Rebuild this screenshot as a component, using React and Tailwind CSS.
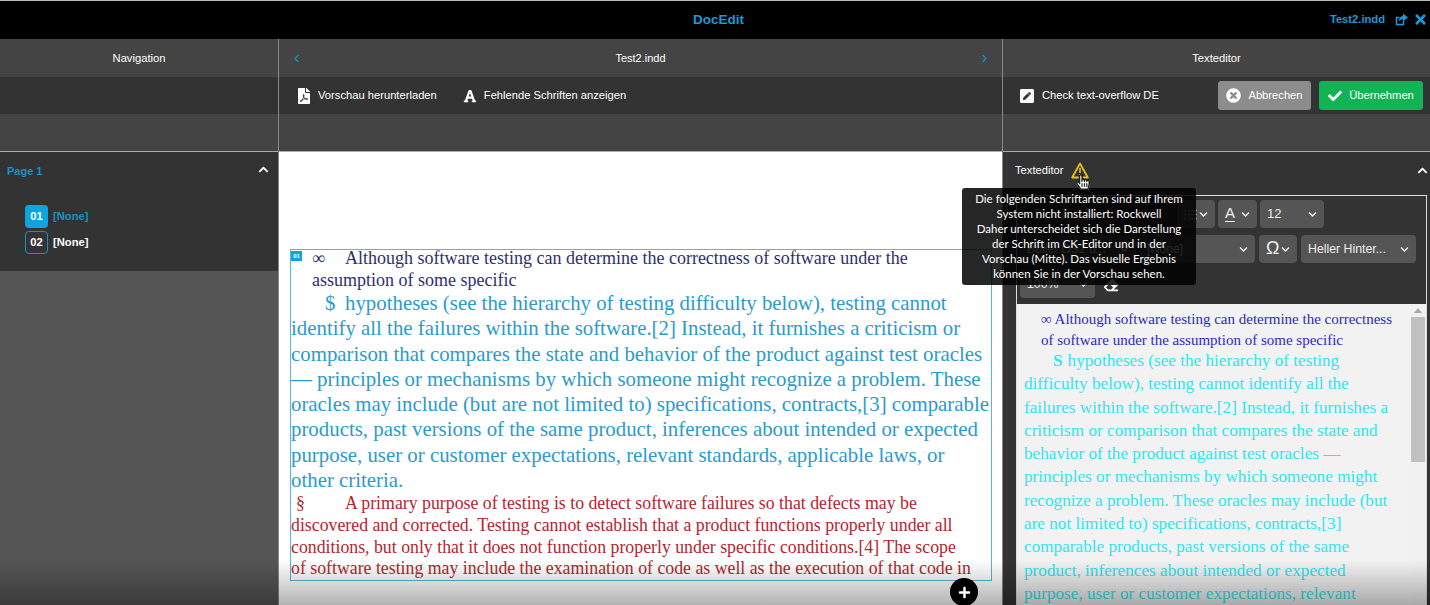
import React from "react";
import {
    FaChevronLeft,
    FaChevronRight,
    FaChevronUp,
    FaChevronDown,
    FaFilePdf,
    FaFont,
    FaPenSquare,
    FaTimesCircle,
    FaCheck,
    FaTimes,
    FaEraser,
    FaHandPointer,
    FaRegHandPointer,
    FaPlus,
    FaBold,
    FaItalic,
    FaUnderline,
    FaListUl,
} from "react-icons/fa";

const navyLines = [
    "assumption of some specific",
];

const cyanLines = [
    "identify all the failures within the software.[2] Instead, it furnishes a criticism or",
    "comparison that compares the state and behavior of the product against test oracles",
    "— principles or mechanisms by which someone might recognize a problem. These",
    "oracles may include (but are not limited to) specifications, contracts,[3] comparable",
    "products, past versions of the same product, inferences about intended or expected",
    "purpose, user or customer expectations, relevant standards, applicable laws, or",
    "other criteria.",
];

const redLines = [
    "discovered and corrected. Testing cannot establish that a product functions properly under all",
    "conditions, but only that it does not function properly under specific conditions.[4] The scope",
    "of software testing may include the examination of code as well as the execution of that code in",
];

const editorCyan = [
    "difficulty below), testing cannot identify all the",
    "failures within the software.[2] Instead, it furnishes a",
    "criticism or comparison that compares the state and",
    "behavior of the product against test oracles —",
    "principles or mechanisms by which someone might",
    "recognize a problem. These oracles may include (but",
    "are not limited to) specifications, contracts,[3]",
    "comparable products, past versions of the same",
    "product, inferences about intended or expected",
    "purpose, user or customer expectations, relevant",
];

const Select = ({ width, children }) => (
    <div
        className={`flex h-[28px] items-center justify-between rounded-sm bg-[#555] px-[7px] text-[12.3px] text-[#eee] ${width}`}
    >
        <span className="whitespace-nowrap">{children}</span>
        <FaChevronDown className="ml-px shrink-0 text-[9px]" />
    </div>
);

const App = () => {
    return (
        <div className="relative h-screen w-full overflow-hidden bg-black font-['Liberation_Sans',sans-serif] text-[11.2px] text-white">
            {/* top bar */}
            <header className="relative flex h-[39px] items-center justify-center border-t border-[#bbb] bg-black">
                <div className="pl-[7px] text-[13.5px] font-bold text-[#1a9ad6]">DocEdit</div>
                <div className="absolute right-[2px] top-[10px] flex items-center text-[#1a9ad6]">
                    <span className="mr-[10px] text-[11.2px] font-bold">Test2.indd</span>
                    <svg className="mr-[5px]" width="13" height="13" viewBox="0 0 13 13">
                        <path d="M8.5 8v3.5h-7v-7h3" fill="none" stroke="currentColor" strokeWidth="1.5" />
                        <path d="M8 0.5 13 4.5 8 8.5V6.2C6 6.2 4.6 6.9 3.8 8.8 3.8 5.6 5.5 3.4 8 3.1z" fill="currentColor" />
                    </svg>
                    <FaTimes className="text-[15px]" />
                </div>
            </header>

            <div className="flex h-[566px]">
                {/* Navigation */}
                <aside className="flex w-[279px] shrink-0 flex-col border-r border-[#888]">
                    <div className="flex h-[38px] items-center justify-center bg-[#444]">Navigation</div>
                    <div className="h-[37px] bg-[#333]"></div>
                    <div className="h-[38px] border-b border-[#aaa] bg-[#444]"></div>
                    <div className="h-[119px] bg-[#333] px-[7px] pt-[11px]">
                        <div className="flex items-center justify-between pr-[2px]">
                            <span className="text-[11px] font-bold text-[#1a8fc8]">Page 1</span>
                            <FaChevronUp className="mb-1 text-[11px]" />
                        </div>
                        <div className="ml-[18px] mt-[25px] flex items-center gap-[5px]">
                            <span className="flex h-[23px] w-[23px] items-center justify-center rounded-[4px] bg-[#0ea5df] font-bold">01</span>
                            <span className="font-bold text-[#1a8fc8]">[None]</span>
                        </div>
                        <div className="ml-[18px] mt-[3px] flex items-center gap-[5px]">
                            <span className="flex h-[23px] w-[23px] items-center justify-center rounded-[4px] border border-[#1a8fc8] font-bold">02</span>
                            <span className="font-bold">[None]</span>
                        </div>
                    </div>
                    <div className="flex-1 bg-[#555]"></div>
                </aside>

                {/* Preview */}
                <main className="flex min-w-0 flex-1 flex-col">
                    <div className="flex h-[38px] items-center justify-between bg-[#444] px-[13px] text-[#1a8fc8]">
                        <FaChevronLeft className="text-[9px]" />
                        <span className="text-[11px] text-white">Test2.indd</span>
                        <FaChevronRight className="text-[9px]" />
                    </div>
                    <div className="flex h-[37px] items-center bg-[#333] pl-[17px]">
                        <FaFilePdf className="mr-[6px] text-[16px]" />
                        <span>Vorschau herunterladen</span>
                        <FaFont className="ml-[26px] mr-[7px] text-[14px]" />
                        <span>Fehlende Schriften anzeigen</span>
                    </div>
                    <div className="h-[38px] border-b border-[#aaa] bg-[#444]"></div>
                    <div className="flex-1 overflow-hidden bg-white pl-[11px] pr-[10px] pt-[97px]">
                        <div className="relative h-[332px] overflow-hidden whitespace-nowrap border border-[#5ab4dc] font-['Liberation_Serif',serif]">
                            <span className="absolute left-0 top-px flex h-[10px] w-[11px] items-center justify-center bg-[#0ea5df] font-['Liberation_Sans',sans-serif] text-[6px] font-bold text-white">01</span>
                            <div className="-mt-[3px] pl-[21px] text-[18px] leading-[22px] text-[#2f2f6e]">
                                <div>
                                    <span className="inline-block w-[33px]">∞</span>
                                    Although software testing can determine the correctness of software under the
                                </div>
                                {navyLines.map((line) => (
                                    <div key={line}>{line}</div>
                                ))}
                            </div>
                            <div className="text-[20.85px] leading-[25.3px] text-[#2b9bcb]">
                                <div className="pl-[34px]">
                                    <span className="inline-block w-[20px]">$</span>
                                    hypotheses (see the hierarchy of testing difficulty below), testing cannot
                                </div>
                                {cyanLines.map((line) => (
                                    <div key={line}>{line}</div>
                                ))}
                            </div>
                            <div className="text-[17.8px] leading-[21.7px] text-[#b3262e]">
                                <div className="pl-[5px]">
                                    <span className="inline-block w-[49px]">§</span>
                                    A primary purpose of testing is to detect software failures so that defects may be
                                </div>
                                {redLines.map((line) => (
                                    <div key={line}>{line}</div>
                                ))}
                            </div>
                        </div>
                    </div>
                </main>

                {/* Text editor */}
                <aside className="flex w-[428px] shrink-0 flex-col border-l border-[#888]">
                    <div className="flex h-[38px] items-center justify-center bg-[#444]">Texteditor</div>
                    <div className="flex h-[37px] items-center bg-[#333] pl-[16px] pr-[7px]">
                        <FaPenSquare className="mr-[7px] text-[16px]" />
                        <span>Check text-overflow DE</span>
                        <div className="ml-auto flex h-[29px] w-[93px] items-center justify-center gap-[7px] rounded-[3px] bg-[#8c8c8c]">
                            <FaTimesCircle className="text-[15px]" />
                            <span>Abbrechen</span>
                        </div>
                        <div className="ml-[8px] flex h-[29px] w-[104px] items-center justify-center gap-[7px] rounded-[3px] bg-[#12b355]">
                            <FaCheck className="text-[14px]" />
                            <span>Übernehmen</span>
                        </div>
                    </div>
                    <div className="h-[38px] border-b border-[#aaa] bg-[#444]"></div>

                    <div className="flex flex-1 flex-col overflow-hidden bg-[#333]">
                        <div className="flex h-[43px] shrink-0 items-center justify-between pb-[6px] pl-[12px] pr-[2px]">
                            <div className="flex items-center gap-[7px]">
                                <span>Texteditor</span>
                                <svg width="18" height="17" viewBox="0 0 18 17" fill="none" stroke="#e3c31a" strokeWidth="1.8" strokeLinejoin="round">
                                    <path d="M9 1.5 1.2 15.5h15.6z" />
                                    <path d="M9 6v5M9 12.5v1.2" stroke="#e3c31a" strokeWidth="1.6" />
                                </svg>
                            </div>
                            <FaChevronUp className="text-[11px]" />
                        </div>

                        {/* CK editor */}
                        <div className="ml-[13px] mr-[3px] flex min-h-0 flex-1 flex-col border-x border-t border-[#ddd]">
                            <div className="flex h-[108px] shrink-0 flex-col gap-[7px] px-[3px] pt-[4px]">
                                <div className="flex items-center gap-[3px] pl-[12px]">
                                    <div className="flex items-center gap-[14px] text-[12px] text-[#aaa]">
                                        <FaBold />
                                        <FaItalic />
                                        <FaUnderline />
                                    </div>
                                    <div className="ml-auto"></div>
                                    <Select width="w-[38px]">
                                        <FaListUl className="text-[13px] text-[#999]" />
                                    </Select>
                                    <Select width="w-[39px]">
                                        <span className="border-b border-white text-[15px] leading-[17px]">A</span>
                                    </Select>
                                    <Select width="w-[64px]">
                                        <span className="text-[13px]">12</span>
                                    </Select>
                                    <div className="w-[96px]"></div>
                                </div>
                                <div className="flex items-center gap-[4px]">
                                    <Select width="w-[116px]">Bullet OS2 d...</Select>
                                    <Select width="w-[115px]">[None]</Select>
                                    <Select width="w-[38px]">
                                        <span className="text-[18px] leading-[20px]">Ω</span>
                                    </Select>
                                    <Select width="w-[115px]">Heller Hinter...</Select>
                                </div>
                                <div className="flex items-center gap-[9px]">
                                    <Select width="w-[75px]">100%</Select>
                                    <FaEraser className="mt-[2px] text-[14px]" />
                                </div>
                            </div>
                            <div className="relative min-h-0 flex-1 overflow-hidden whitespace-nowrap bg-[#f2f2f2] pl-[7px] pt-[5px] font-['Liberation_Serif',serif]">
                                <div className="pl-[17px] text-[15px] leading-[21px] text-[#2a2ac4]">
                                    <div>∞ Although software testing can determine the correctness</div>
                                    <div>of software under the assumption of some specific</div>
                                </div>
                                <div className="-mt-[2px] text-[17.2px] leading-[23.3px] text-[#2ee6f0]">
                                    <div className="pl-[29px]">
                                        <span className="mr-[5px] font-bold">S</span>
                                        hypotheses (see the hierarchy of testing
                                    </div>
                                    {editorCyan.map((line) => (
                                        <div key={line}>{line}</div>
                                    ))}
                                </div>
                                <div className="absolute bottom-0 right-px top-0 w-[14px] bg-[#f1f1f1]">
                                    <div className="mx-auto mt-[4px] h-0 w-0 border-x-[4px] border-b-[5px] border-x-transparent border-b-[#aaa]"></div>
                                    <div className="mt-[4px] h-[145px] bg-[#c1c1c1]"></div>
                                </div>
                            </div>
                        </div>
                    </div>
                </aside>
            </div>

            {/* tooltip over the editor */}
            <div className="absolute left-[962px] top-[188px] flex h-[97px] w-[234px] flex-col justify-center rounded-[3px] bg-black/85 pb-[2px] text-center font-['Lato',sans-serif] text-[11.5px] leading-[15px] text-white">
                <div>Die folgenden Schriftarten sind auf Ihrem</div>
                <div>System nicht installiert: Rockwell</div>
                <div>Daher unterscheidet sich die Darstellung</div>
                <div>der Schrift im CK-Editor und in der</div>
                <div>Vorschau (Mitte). Das visuelle Ergebnis</div>
                <div>können Sie in der Vorschau sehen.</div>
            </div>

            {/* mouse pointer */}
            <FaHandPointer className="absolute left-[1075px] top-[174px] text-[16px] text-white" />
            <FaRegHandPointer className="absolute left-[1075px] top-[174px] text-[16px] text-[#222]" />

            {/* fade at the bottom */}
            <div className="pointer-events-none absolute inset-x-0 bottom-0 h-[45px] bg-gradient-to-t from-black/30 to-transparent"></div>

            <div className="absolute left-[950px] top-[578px] flex h-[28px] w-[28px] items-center justify-center rounded-full bg-black">
                <FaPlus className="text-[13px] text-white" />
            </div>
        </div>
    );
};

export default App;
